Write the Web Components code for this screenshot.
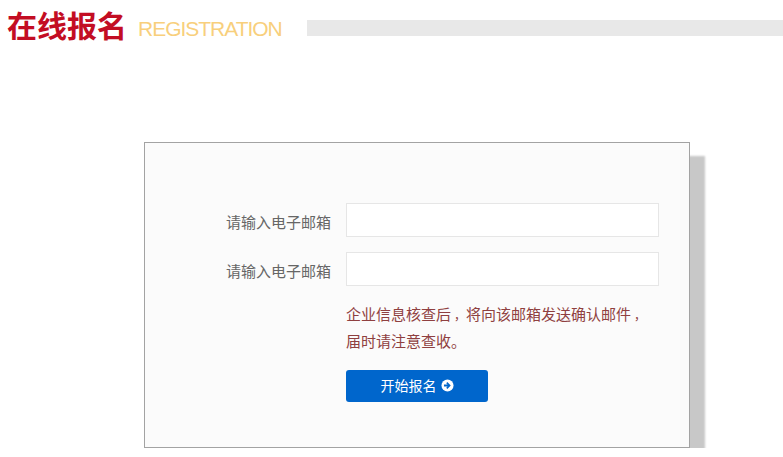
<!DOCTYPE html>
<html lang="zh">
<head>
<meta charset="utf-8">
<title>在线报名</title>
<style>
  html, body { margin: 0; padding: 0; background: #fff; overflow: hidden; }
  body { font-family: "Liberation Sans", "Noto Sans CJK SC", sans-serif; }
  .comma { display: inline-block; width: 15px; font-size: 12px; line-height: 1; text-indent: 3px; }
</style>
</head>
<body>
<page-title heading="在线报名" sub="REGISTRATION"></page-title>
<signup-card>
  <form-row label="请输入电子邮箱"><text-box></text-box></form-row>
  <form-row label="请输入电子邮箱"><text-box></text-box></form-row>
  <form-row class="note">企业信息核查后<span class="comma">，</span>将向该邮箱发送确认邮件<span class="comma">，</span><br>届时请注意查收。</form-row>
  <form-row class="action"><start-button>开始报名</start-button></form-row>
</signup-card>

<script>
class PageTitle extends HTMLElement {
    constructor() {
        super();
        this.attachShadow({ mode: 'open' });
        this.shadowRoot.innerHTML = `
        <style>
          :host { display: flex; align-items: center; height: 56px; padding-left: 7px; }
          h1 {
            margin: 0 11px 8px 0;
            font: bold 30px/48px "Noto Sans CJK SC", sans-serif;
            color: #c30d23;
          }
          span {
            font: 21px/56px "Liberation Sans", sans-serif;
            letter-spacing: -1.02px;
            color: #f8cf7c;
            margin-right: 25px;
            padding-top: 2px;
          }
          i { flex: 1; height: 16px; background: #e8e8e8; }
        </style>
        <h1>${this.getAttribute('heading')}</h1>
        <span>${this.getAttribute('sub')}</span>
        <i></i>
      `;
    }
}

class SignupCard extends HTMLElement {
    constructor() {
        super();
        this.attachShadow({ mode: 'open' });
        this.shadowRoot.innerHTML = `
        <style>
          :host {
            display: flex;
            flex-direction: column;
            box-sizing: border-box;
            width: 546px;
            height: 306px;
            margin: 86px 0 0 144px;
            padding: 60px 30px 0 0;
            background: #fbfbfb;
            border: 1px solid #a3a3a3;
            box-shadow: 15px 14px 2px #c8c8c8;
            clip-path: inset(-10px -25px 0 -10px);
          }
        </style>
        <slot></slot>
      `;
    }
}

class FormRow extends HTMLElement {
    constructor() {
        super();
        this.attachShadow({ mode: 'open' });
        this.shadowRoot.innerHTML = `
        <style>
          :host {
            display: grid;
            grid-template-columns: 186px 1fr;
            column-gap: 15px;
            align-items: center;
            margin-bottom: 15px;
            font: 15px/28px "Liberation Sans", "Noto Sans CJK SC", sans-serif;
            color: #666;
          }
          :host(.note) { margin: 0 0 15px; line-height: 27px; color: #8f4040; }
          label { text-align: right; padding-top: 6px; }
        </style>
        <label>${this.getAttribute('label') || ''}</label>
        <div><slot></slot></div>
      `;
    }
}

class TextBox extends HTMLElement {
    constructor() {
        super();
        this.attachShadow({ mode: 'open' });
        this.shadowRoot.innerHTML = `
        <style>
          :host { display: block; }
          input {
            display: block;
            box-sizing: border-box;
            width: 313px;
            height: 34px;
            padding: 0 10px;
            border: 1px solid #e6e6e6;
            background: #fff;
            outline: none;
          }
        </style>
        <input type="text">
      `;
    }
}

class StartButton extends HTMLElement {
    constructor() {
        super();
        this.attachShadow({ mode: 'open' });
        this.shadowRoot.innerHTML = `
        <style>
          :host { display: block; }
          button {
            display: flex;
            align-items: center;
            justify-content: center;
            gap: 4px;
            width: 142px;
            height: 32px;
            padding: 0 0 2px;
            border: none;
            border-radius: 3px;
            background: #0066cc;
            color: #fff;
            font: 14px "Liberation Sans", "Noto Sans CJK SC", sans-serif;
            cursor: pointer;
          }
          svg { width: 13px; height: 13px; }
        </style>
        <button type="button">
          <slot></slot>
          <svg viewBox="0 0 14 14"><circle cx="7" cy="7" r="6.5" fill="#fff"/><path d="M3.2 6h3.9L5.6 4.5 6.8 3.3 10.5 7 6.8 10.7 5.6 9.5 7.1 8H3.2z" fill="#0066cc"/></svg>
        </button>
      `;
    }
}

customElements.define('page-title', PageTitle);
customElements.define('signup-card', SignupCard);
customElements.define('form-row', FormRow);
customElements.define('text-box', TextBox);
customElements.define('start-button', StartButton);
</script>
</body>
</html>
